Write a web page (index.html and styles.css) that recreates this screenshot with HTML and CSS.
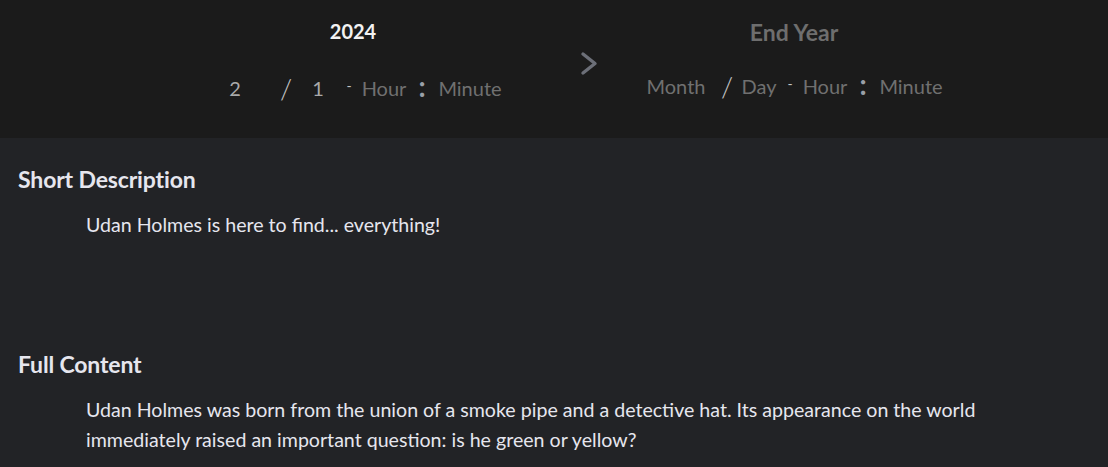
FILE: index.html
```html
<!DOCTYPE html>
<html lang="en">
<head>
    <meta charset="UTF-8">
    <meta name="viewport" content="width=device-width, initial-scale=1.0">
    <title>Udan Holmes</title>
    <link rel="stylesheet" href="styles.css">
</head>
<body>
    <div class="date-bar">
        <div class="date-col">
            <div class="year">2024</div>
            <div class="date-row">
                <span class="f f-month filled">2</span>
                <span class="sep slash">/</span>
                <span class="f f-day filled">1</span>
                <span class="sep dash">-</span>
                <span class="f f-hour">Hour</span>
                <span class="sep colon">:</span>
                <span class="f f-minute">Minute</span>
            </div>
        </div>

        <div class="arrow">
            <svg width="20" height="26" viewBox="0 0 20 26">
                <polyline points="3,3 15,12.5 3,22" fill="none" stroke="#6c6f78" stroke-width="3.4" stroke-linecap="round" stroke-linejoin="round"/>
            </svg>
        </div>

        <div class="date-col">
            <div class="year placeholder">End Year</div>
            <div class="date-row end">
                <span class="f f-month">Month</span>
                <span class="sep slash">/</span>
                <span class="f f-day">Day</span>
                <span class="sep dash">-</span>
                <span class="f f-hour">Hour</span>
                <span class="sep colon">:</span>
                <span class="f f-minute">Minute</span>
            </div>
        </div>
    </div>

    <div class="content">
        <div class="section">
            <h2>Short Description</h2>
            <p class="short">Udan Holmes is here to find... everything!</p>
        </div>
        <div class="section">
            <h2>Full Content</h2>
            <p>Udan Holmes was born from the union of a smoke pipe and a detective hat. Its appearance on the world immediately raised an important question: is he green or yellow?</p>
        </div>
    </div>
</body>
</html>
```

FILE: styles.css
```css
body {
    font-family: 'Lato', 'Liberation Sans', sans-serif;
    background-color: #222326;
    color: #e6e6ee;
    margin: 0;
    padding: 0;
}
.date-bar {
    display: flex;
    align-items: flex-start;
    height: 138px;
    box-sizing: border-box;
    padding: 18px 0 0 194px;
    background-color: #1b1b1b;
}
.date-col {
    display: flex;
    flex-direction: column;
    align-items: center;
}
.year {
    font-size: 20px;
    font-weight: bold;
    line-height: 26px;
    color: #f2f2f2;
}
.year.placeholder {
    font-size: 23px;
    color: #6e6e6e;
    margin-top: 1px;
}
.date-row {
    display: flex;
    align-items: center;
    height: 30px;
    margin: 29px 6px 0 0;
    font-size: 20px;
    line-height: 30px;
    color: #707070;
}
.date-row.end {
    margin-top: 26px;
}
.f {
    text-align: center;
}
.f.filled {
    color: #a9a9a9;
}
.f-month {
    width: 82px;
}
.f-day {
    width: 44px;
}
.f-hour {
    width: 52px;
}
.f-minute {
    width: 72px;
}
.sep {
    text-align: center;
    color: #c4c4c4;
}
.slash {
    width: 20px;
    font-size: 28px;
    font-weight: 300;
}
.dash {
    width: 18px;
    font-size: 14px;
    margin-top: -4px;
}
.colon {
    width: 24px;
    font-size: 28px;
    font-weight: bold;
    color: #9aa0a8;
    margin-top: -5px;
}
.arrow {
    margin: 33px 25px 0 58px;
    width: 40px;
    display: flex;
    justify-content: center;
}
.content {
    padding: 27px 18px 0 18px;
}
.section h2 {
    margin: 0 0 17px 0;
    font-size: 23px;
    line-height: 28px;
    font-weight: bold;
    letter-spacing: -0.15px;
}
.section + .section {
    margin-top: 20px;
}
.section p {
    margin: 0;
    padding-left: 68px;
    max-width: 940px;
    font-size: 19.6px;
    line-height: 30px;
}
.section p.short {
    min-height: 120px;
}
```
